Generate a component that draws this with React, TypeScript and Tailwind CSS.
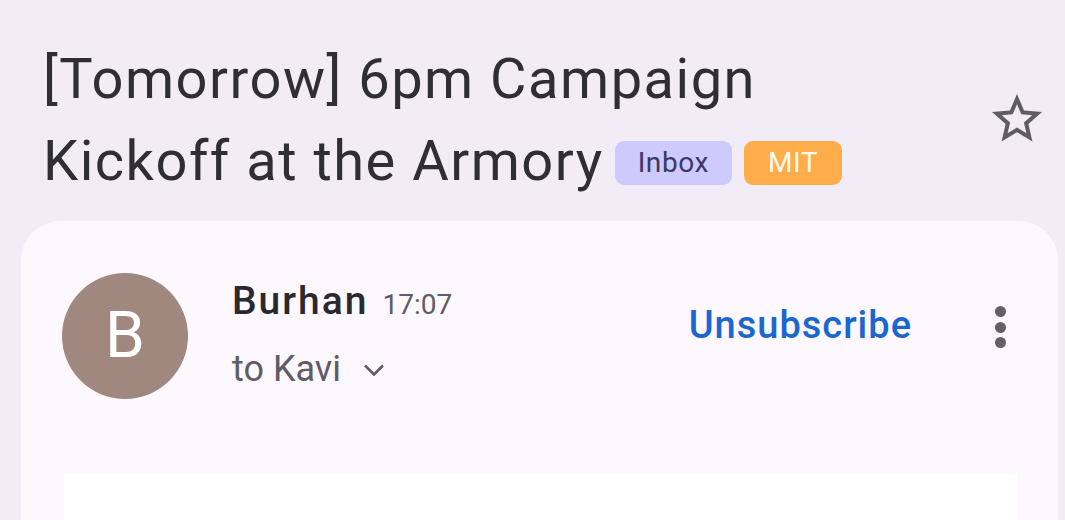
const Star = () => (
  <svg viewBox="0 0 24 24" className="h-[60px] w-[60px] fill-[#5f5c66]">
    <path d="M22 9.24l-7.19-.62L12 2 9.19 8.63 2 9.24l5.46 4.73L5.82 21 12 17.27 18.18 21l-1.63-7.03L22 9.24zM12 15.4l-3.76 2.27 1-4.28-3.32-2.88 4.38-.38L12 6.1l1.71 4.04 4.38.38-3.32 2.88 1 4.28L12 15.4z" />
  </svg>
)

const App = () => {
  return (
    <div className="h-[520px] w-[1065px] overflow-hidden bg-[#f1ecf5] font-['Roboto',sans-serif]">
      {/* subject */}
      <div className="flex items-start pl-[43px] pr-[18px] pt-[38px]">
        <h1 className="flex-1 text-[56px] leading-[82px] font-normal tracking-[1.5px] text-[#2f2d35]">
          [Tomorrow] 6pm Campaign
          <br />
          Kickoff at the Armory
          <span className="ml-[11px] inline-flex h-[44px] items-center rounded-[9px] bg-[#cecafe] px-[23px] align-[8px] text-[28px] leading-none tracking-[0.6px] text-[#3b3869]">
            Inbox
          </span>
          <span className="ml-[12px] inline-flex h-[44px] items-center rounded-[9px] bg-[#fead4a] px-[24px] align-[8px] text-[28px] leading-none tracking-[0.6px] text-[#fffaf0]">
            MIT
          </span>
        </h1>
        <button className="mt-[51px]">
          <Star />
        </button>
      </div>

      {/* message card */}
      <div className="mx-[7px] ml-[21px] mt-[19px] h-[400px] rounded-t-[39px] bg-[#fcf8fd] pt-[52px]">
        <div className="flex items-start pl-[41px] pr-[52px]">
          <div className="flex h-[126px] w-[126px] items-center justify-center rounded-full bg-[#a0887e] text-[64px] font-normal text-white">
            B
          </div>
          <div className="ml-[44px] mt-[6px] flex-1">
            <div className="flex items-baseline gap-[14px] leading-[44px]">
              <span className="text-[39px] font-medium tracking-[2px] text-[#2b2930]">Burhan</span>
              <span className="text-[28px] text-[#5f5c66]">17:07</span>
            </div>
            <div className="mt-[20px] flex items-center gap-[22px] text-[36px] leading-[44px] text-[#5f5c66]">
              <span>to Kavi</span>
              <svg viewBox="0 0 22 12" className="mt-[2px] h-[12px] w-[22px] fill-none stroke-[#5f5c66] stroke-[2.6]">
                <path d="M2 1.5l9 9 9-9" />
              </svg>
            </div>
          </div>
          <span className="mt-[30px] text-[38px] font-medium leading-[44px] tracking-[1px] text-[#1b67d0]">
            Unsubscribe
          </span>
          <div className="ml-[83px] mt-[33px] flex flex-col gap-[4.5px]">
            <span className="h-[11px] w-[11px] rounded-full bg-[#625f69]" />
            <span className="h-[11px] w-[11px] rounded-full bg-[#625f69]" />
            <span className="h-[11px] w-[11px] rounded-full bg-[#625f69]" />
          </div>
        </div>
        <div className="ml-[43px] mr-[41px] mt-[75px] h-[60px] bg-white" />
      </div>
    </div>
  )
}

export default App
